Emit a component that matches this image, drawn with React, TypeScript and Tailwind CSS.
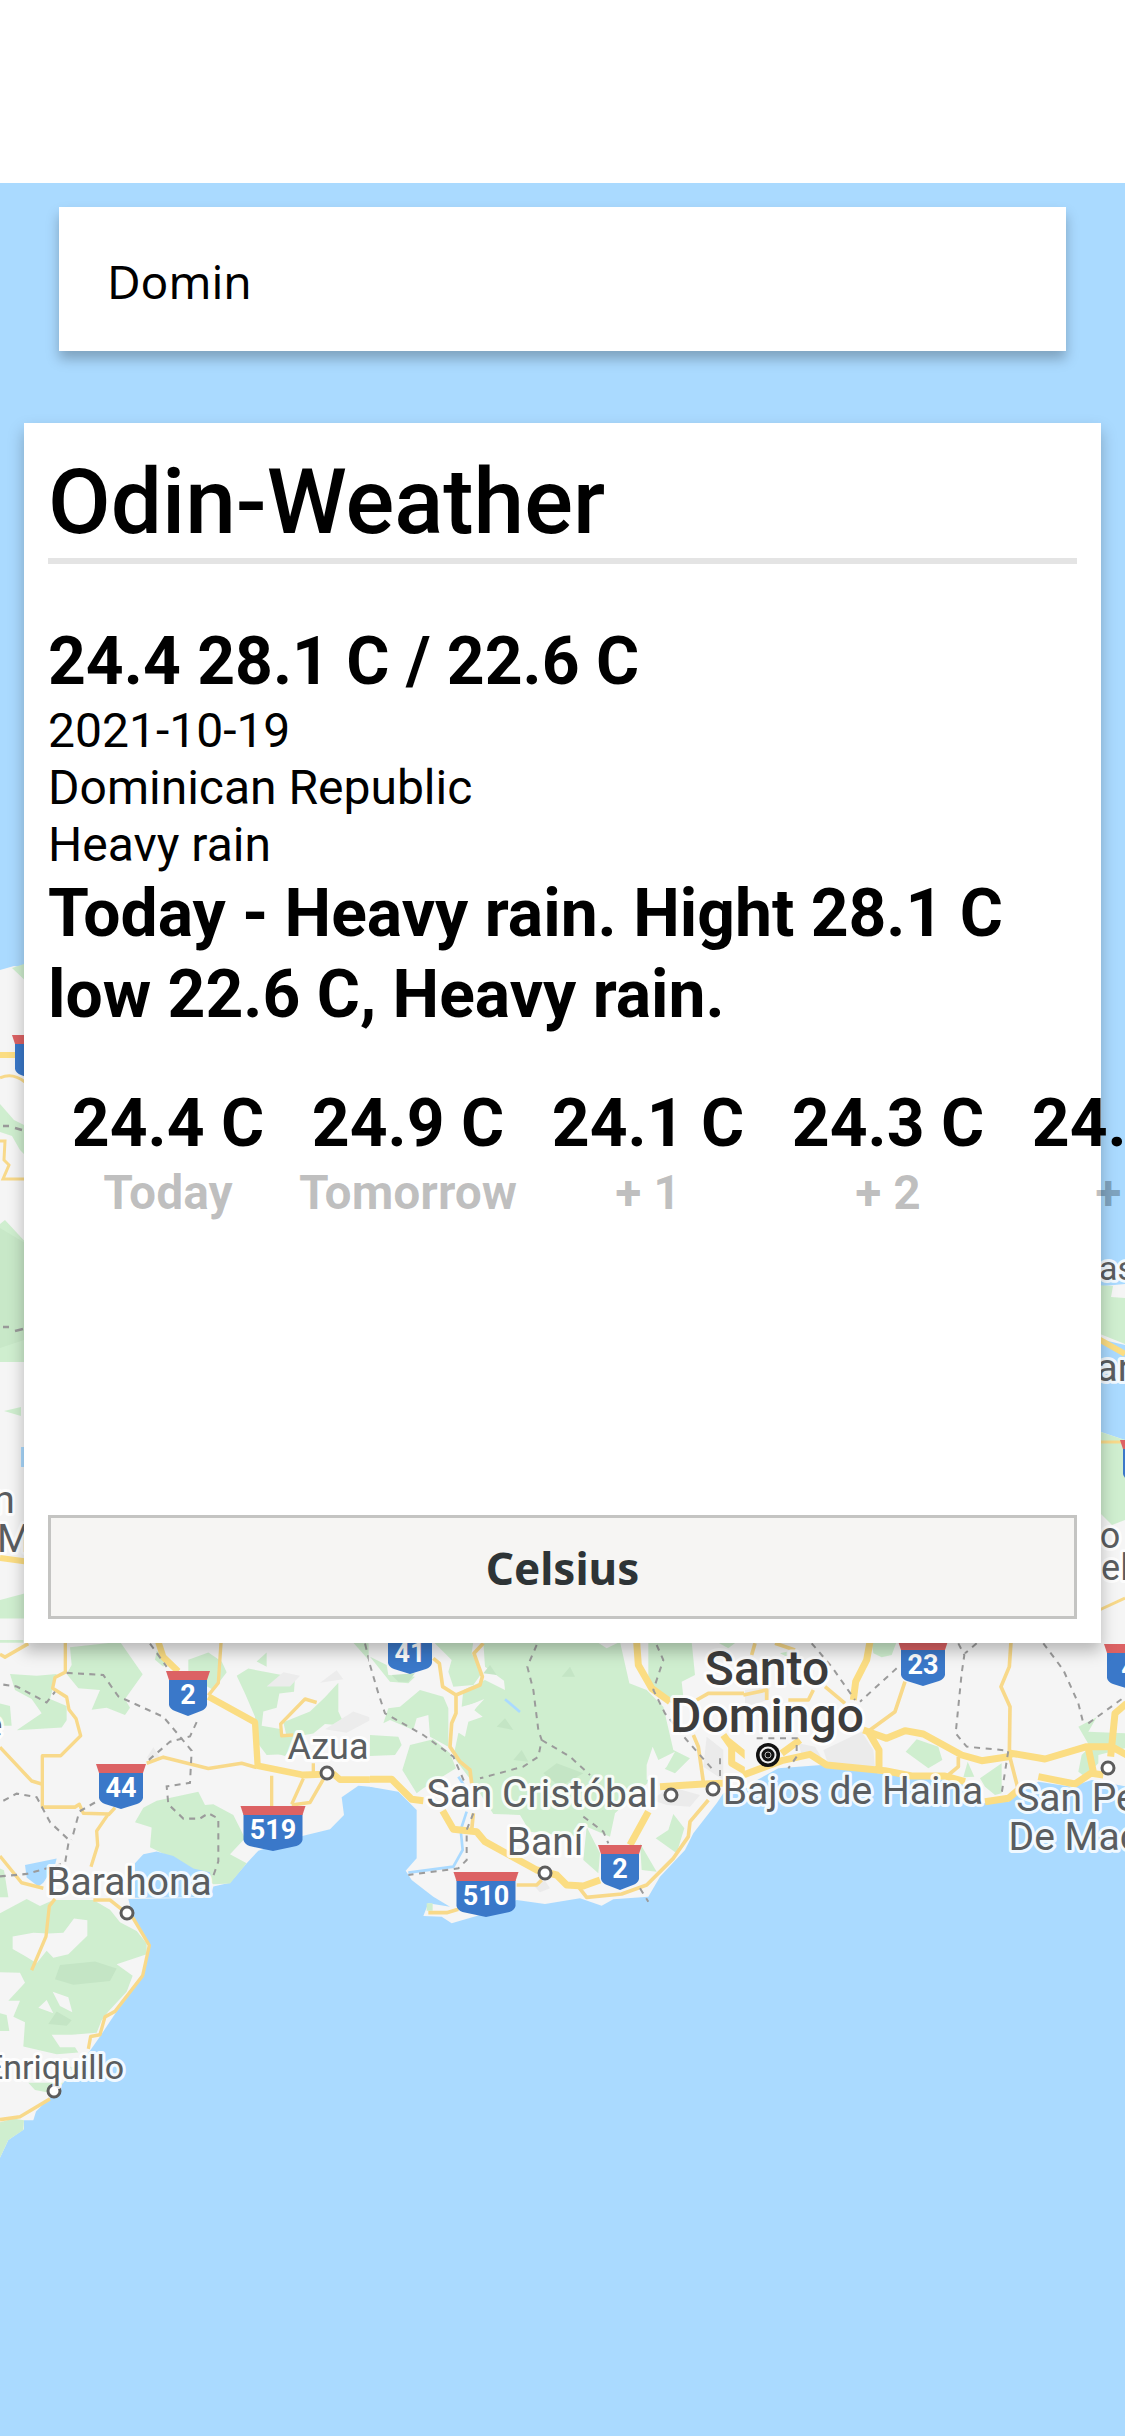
import React, { useState } from "react";

const WATER = "#aadaff";
const LAND = "#f5f5f5";
const GREEN = "#cfeecf";
const SHADE = "#c4e5c5";
const URBAN = "#ebebeb";
const ROAD = "#fbdd83";
const MINOR = "#f8d98a";

type ShieldProps = { x: number; y: number; w: number; label: string };

function Shield({ x, y, w, label }: ShieldProps) {
  const h = w / 2;
  return (
    <g transform={`translate(${x} ${y})`}>
      <path
        d={`M${3 - h} 8H${h - 3}V34Q${h - 4} 38 ${h - 9} 40L0 45L${9 - h} 40Q${4 - h} 38 ${3 - h} 34Z`}
        fill="#3a78c9"
      />
      <path d={`M${-h} 0H${h}L${h - 3} 9H${3 - h}Z`} fill="#dc6264" />
      <text y={33} textAnchor="middle" fontSize={27} fontWeight={700} fill="#fff">
        {label}
      </text>
    </g>
  );
}

type PlaceProps = {
  x: number;
  y: number;
  size?: number;
  weight?: number;
  fill?: string;
  children: string;
};

function Place({ x, y, size = 39, weight = 400, fill = "#5a5d60", children }: PlaceProps) {
  return (
    <text
      x={x}
      y={y}
      textAnchor="middle"
      fontSize={size}
      fontWeight={weight}
      fill={fill}
      stroke="#fff"
      strokeOpacity={0.85}
      strokeWidth={6}
      strokeLinejoin="round"
      paintOrder="stroke"
    >
      {children}
    </text>
  );
}

function Town({ x, y }: { x: number; y: number }) {
  return <circle cx={x} cy={y} r={6} fill="#fff" stroke="#5c5c5c" strokeWidth={3} />;
}

function WestCoast() {
  return (
    <g transform="translate(0 1640) scale(0.33333 0.35714)">
      <path
        d="M0-60H1145V414L1075 408L1025 440L1032 490L990 530L910 548L775 590L740 625L690 680L640 690L632 722L385 725L400 780L450 860L425 945L350 1040L300 1110L270 1150L190 1240L150 1280L108 1320L100 1345L72 1345V1370L25 1400L0 1450Z"
        fill={LAND}
      />
      <g fill={GREEN}>
        <path d="M210 20L360 5L428 96L375 165L390 190L375 210L320 190L275 195L300 140L235 135L200 95L215 70Z" />
        <path d="M30 95L110 100L170 95L150 165L200 185V225L185 245L50 253L125 205L95 165L45 140Z" />
        <path d="M0 178L30 185L35 240H0Z" />
        <path d="M565 55L625 35L665 60L680 90L640 140L565 100Z" />
        <path d="M770 60L800 35V75ZM710 100L745 80L885 105L882 145L838 150L830 190L790 200L785 240L845 250L850 320L800 322L770 285L765 215L735 150Z" />
        <path d="M1015 120V200L1035 240L975 235L940 262L900 268L855 325L800 310L790 265L860 270L850 230L930 200L975 160Z" />
        <path d="M470 30L500 55L490 75L465 55ZM0 0H70V8H0ZM1060 8L1140 10V100L1110 60Z" />
        <path d="M405 510L430 470L470 450L595 425L615 462L640 460L700 490L735 555L690 600L740 625L690 682L640 684L560 630L450 580L455 525Z" />
        <path d="M0 640L12 645L25 720H0Z" />
        <path d="M0 765L80 725L120 745L160 728H280L330 755L360 790L410 815L440 850V880L350 908L398 940L380 985L325 1040L305 1065L290 1100L215 1105L155 1105L180 1140H225L235 1155L170 1160L70 1138L75 1070L40 1055L60 1010H25L75 960L60 932L0 930Z" />
        <path d="M0 1045L20 1050L28 1095H0ZM85 1240H190L160 1270L105 1260ZM0 1350L40 1340L72 1345L70 1372L25 1400L0 1450ZM210 1195L245 1200L225 1230Z" />
      </g>
      <g fill={LAND}>
        <path d="M38 830L100 820L145 822L190 820L222 780L262 785V828L205 880L160 890L140 870L110 905L75 885L38 865Z" />
        <path d="M115 1030L140 1008L160 1045ZM158 985L205 1000L217 1042L180 1025Z" />
      </g>
      <g fill={SHADE}>
        <path d="M165 950L180 910L285 900L350 920L330 955L220 965ZM145 1075L170 1040L215 1065L200 1080Z" />
      </g>
      <g fill="#ececec">
        <path d="M800 130L850 90L900 100L870 130ZM960 120L1010 85L1030 110ZM975 250L1060 200L1120 220L1040 260ZM440 330L460 300L480 330Z" />
      </g>
      <g fill={WATER}>
        <path d="M75 630L170 612L165 630L130 680L115 690L80 665ZM405 625L430 600L470 592L520 605L580 640L630 650L640 720L405 722Z" />
      </g>
      <g fill="none" stroke={MINOR} strokeWidth={10} strokeLinejoin="round">
        <path d="M0 40L15 48L85 10M196 8V90L165 105L158 135L200 160L207 195L228 220L242 268L182 324H127V468H225L238 460L250 485L325 487L290 535L293 575L273 635" />
        <path d="M0 300L95 395L125 403M0 605L65 680L130 695M663 8L655 120L625 155M440 345L490 328L625 360L725 345L770 357" />
        <path d="M950 175L915 165L842 235L845 268L880 266M815 380V465M910 388L875 460M970 390L930 455L875 462M940 345V370M345 470L325 490" />
        <path d="M165 725L148 745L138 830L95 925M280 728H330L400 780L448 855L428 940L345 1040L315 1055L300 1105L272 1110L265 1145M0 1343L60 1335L150 1285" />
      </g>
      <g fill="none" stroke={ROAD} strokeWidth={19} strokeLinejoin="round">
        <path d="M475 5L490 48L535 88M625 158L765 230L773 352L910 378L1000 375L1020 391H1140" />
      </g>
      <g fill="none" stroke="#9b9b9b" strokeWidth={6} strokeDasharray="18 16">
        <path d="M10 125L50 130L140 175L165 145M200 92L310 98L355 158L490 215L575 310L570 400L500 410L505 460L550 500L600 500L625 485L655 500V620L640 660" />
        <path d="M450 10L500 75M590 230L570 270L510 285L435 345M10 450L50 430L110 440L150 510L207 560L195 625L80 655L0 662M285 455L238 480L215 560M1095 10L1140 180" />
      </g>
    </g>
  );
}

function CentralCoast() {
  return (
    <g transform="translate(370 1640) scale(0.33333)">
      <path
        d="M-5-60H1145V440L1060 460L1040 490L970 580L945 630L870 710L835 770L730 778L695 797L630 775L525 792L440 780L330 825L245 850L215 830L160 828L175 790L240 800L190 770L125 720L107 692L140 655V510L85 455L0 440Z"
        fill={LAND}
      />
      <g fill={GREEN}>
        <path d="M190 5H310L305 40L335 100L310 135L250 140L235 95L245 60ZM0 50L50 75L55 105L135 110L115 130L60 125Z" />
        <path d="M40 250L55 205L90 200L150 150L220 170L235 205V320L180 290L175 225L140 235L130 270L60 240ZM0 285L85 290L95 315L75 345L0 348Z" />
        <path d="M340 5H680L710 25L750 5L778 130L830 150L880 200L910 330L960 355L915 400L845 370L832 430L735 520L720 590L650 560L620 590L480 575L450 525L370 522L310 430L250 350L265 280L300 230L330 185L275 200L280 150L345 120L405 150L402 122L345 80Z" />
        <path d="M120 315L190 298L240 340L258 385L160 445L140 460L97 390Z" />
        <path d="M835 5H965L975 105L935 125L940 170L905 190L865 165L835 130ZM910 522L943 565L920 640L857 595L895 570ZM650 560L690 640L685 700L640 660ZM810 610L860 695L815 690ZM170 790H188V812H170ZM1040 5H1100L1075 25Z" />
      </g>
      <g fill={LAND}>
        <path d="M275 205L343 177L312 210L338 230L295 245L285 290L245 265ZM830 375L848 320L865 360L915 335L890 380L862 410L830 420Z" />
      </g>
      <g fill={SHADE}>
        <path d="M380 260L405 235L430 270ZM430 360L455 330L475 365ZM520 400L560 370L640 400L570 440ZM575 110L600 80L615 110ZM340 100L360 75L380 105ZM65 105L135 100L115 125H85Z" />
      </g>
      <path d="M845 480L900 440L990 465L960 500L890 495ZM1010 290L1060 330V420L1000 380ZM490 735L525 722L540 745L510 757Z" fill={URBAN} />
      <g fill="none" stroke={WATER} strokeWidth={8}>
        <path d="M405 178L450 216M265 410L285 440M290 515L272 570L278 630L250 680L115 698" />
      </g>
      <g fill="none" stroke={MINOR} strokeWidth={11} strokeLinejoin="round">
        <path d="M190 55L208 70L218 140L258 165L330 135L337 110L312 40L340 10M258 165V220L245 250L240 320L270 365L300 390L305 430M310 520L305 570M440 735H500L515 720M175 818H230L265 808M625 740L650 772L755 762L830 735L910 655L955 590L960 545L1015 480M970 285L985 320L1000 425M980 180L1015 160H1140" />
      </g>
      <g fill="none" stroke={ROAD} strokeWidth={21} strokeLinejoin="round">
        <path d="M0 418H65L125 478L160 482M218 512L250 568L320 575L345 605L500 690L560 705L590 735L640 738L690 720M780 615L835 515M870 440L1000 432L1060 430M800 5L805 75L845 145L900 185M1060 285L1085 320V370L1145 405M1070 300L1145 360" />
      </g>
      <g fill="none" stroke="#9b9b9b" strokeWidth={6} strokeDasharray="18 17">
        <path d="M500 15L472 80L490 150L505 270L515 300L505 350L460 380L330 415M515 300L600 350L660 405M0 75L25 160L45 220L160 285L250 350L285 430M310 520L290 570V660L265 685L115 705M640 530L700 575L715 610M860 15L880 60L850 150L885 220L950 300L1025 385M810 745L835 785M1050 355V410" />
      </g>
    </g>
  );
}

function EastCoast() {
  return (
    <g transform="translate(745 1640) scale(0.33333)">
      <path
        d="M-5-60H1145V440L1040 420L980 440L880 425L830 450L790 485L715 490L650 425L560 415L400 400L230 375L100 385L0 440Z"
        fill={LAND}
      />
      <path d="M235 330L350 275L385 330L390 380L250 375ZM0 200L70 180L75 140L0 150ZM160 310L210 320L240 370L170 345Z" fill={URBAN} />
      <g fill={GREEN}>
        <path d="M380 5H455L440 45L410 52L385 40ZM482 335L515 298L580 320L592 360L550 385ZM655 412L668 365L688 410ZM705 415L770 370V460L750 465L720 440ZM1000 260L1055 232L1030 275L1140 280V325L1060 345L1060 370L1020 410L1000 395L1010 345L1035 320ZM1100 330H1140V350ZM105 40L125 35V50Z" />
      </g>
      <g fill="none" stroke={MINOR} strokeWidth={11} strokeLinejoin="round">
        <path d="M480 125L450 215L375 270M798 5L793 80L768 140L795 200L793 345L820 450M240 140L300 190M-5 165L65 150V180M130 180H190L205 150M640 350V380L610 405M20 45L30 10M90 10L150 30" />
      </g>
      <g fill="none" stroke={ROAD} strokeWidth={21} strokeLinejoin="round">
        <path d="M375 5L365 60L332 125L325 180M355 270L425 295L480 272L535 282L650 345L710 362L790 350L800 340L900 357L1025 320H1100L1145 345M370 275L402 330V385M-5 405L110 362L195 343L245 375L420 392L500 408H600L660 425M110 340L165 300M720 485L790 475L820 450M880 410L990 432L1045 395L1030 325M1097 350L1110 220L1145 190M1040 400L1075 405" />
      </g>
      <g fill="none" stroke="#9b9b9b" strokeWidth={6} strokeDasharray="18 17">
        <path d="M200 10L260 80L330 180M455 85L345 185M640 10L658 45L650 100L632 280L665 320L790 332L770 460M695 10L660 40M895 10L955 90L1000 190L1015 250M1030 250L1140 170M35 295H155V350L130 385" />
      </g>
    </g>
  );
}

function SideStrips() {
  return (
    <g>
      <path d="M0 970L14 966L60 972V1640H0ZM1060 1290L1125 1284V1345L1095 1338L1060 1330ZM1060 1425L1101 1432L1125 1440V1640H1060Z" fill={LAND} />
      <g fill={GREEN}>
        <path d="M12 968L30 962V985ZM0 1104L14 1120L30 1128V1160L20 1150L12 1136L0 1132ZM0 1224L5 1220L30 1247V1362H0ZM4 1411L21 1407V1416ZM0 1600L30 1592V1645L0 1640Z" />
        <path d="M1095 1285L1113 1286L1111 1297L1125 1298V1344L1095 1332ZM1095 1430L1125 1440V1520L1112 1525L1095 1508Z" />
      </g>
      <path d="M0 1228L30 1246V1338L0 1348Z" fill="#c8e8c8" />
      <path d="M21 1447H30V1467H21Z" fill={WATER} />
      <g fill="none" stroke={MINOR} strokeWidth={3}>
        <path d="M0 1078Q12 1072 25 1082M0 1141H5L4 1160L9 1165L3 1179H24M1095 1442H1125M1095 1612L1125 1598" />
      </g>
      <path d="M0 1055H20M0 1558L30 1562M1095 1337L1125 1354" fill="none" stroke={ROAD} strokeWidth={6} />
      <path d="M3 1126H9M15 1128L22 1130M3 1327H9M15 1331L23 1329" stroke="#999" strokeWidth={2.5} />
    </g>
  );
}

function MapBackdrop() {
  return (
    <svg
      className="absolute inset-0 h-full w-full"
      viewBox="0 183 1125 2253"
      preserveAspectRatio="xMidYMid slice"
      role="img"
      aria-label="Map of the southern Dominican Republic"
    >
      <rect y={0} width={1125} height={2600} fill={WATER} />
      <SideStrips />
      <WestCoast />
      <CentralCoast />
      <EastCoast />

      <Shield x={34} y={1035} w={44} label="" />
      <Shield x={188} y={1671} w={44} label="2" />
      <Shield x={121} y={1764} w={50} label="44" />
      <Shield x={273} y={1806} w={65} label="519" />
      <Shield x={410} y={1629} w={50} label="41" />
      <Shield x={486} y={1872} w={65} label="510" />
      <Shield x={620} y={1845} w={44} label="2" />
      <Shield x={923} y={1641} w={50} label="23" />
      <Shield x={1129} y={1644} w={50} label="4" />
      <Shield x={1142} y={1440} w={44} label="" />

      <Town x={54} y={2091} />
      <Town x={327} y={1773} />
      <Town x={127} y={1913} />
      <Town x={671} y={1795} />
      <Town x={713} y={1789} />
      <Town x={545} y={1873} />
      <Town x={1108} y={1768} />
      <g transform="translate(768 1755)">
        <circle r={12} fill="#111" />
        <circle r={7.5} fill="none" stroke="#eee" strokeWidth={2} />
        <circle r={3} fill="#111" stroke="#bbb" strokeWidth={1} />
      </g>

      <Place x={328} y={1759} size={36}>Azua</Place>
      <Place x={129} y={1895}>Barahona</Place>
      <Place x={54} y={2079} size={34}>Enriquillo</Place>
      <Place x={542} y={1807}>San Cristóbal</Place>
      <Place x={545} y={1855}>Baní</Place>
      <Place x={853} y={1804}>Bajos de Haina</Place>
      <Place x={1105} y={1811}>San Pedro</Place>
      <Place x={1107} y={1850}>De Macorís</Place>
      <Place x={767} y={1685} size={48} weight={500} fill="#3c3c3c">Santo</Place>
      <Place x={767} y={1732} size={48} weight={500} fill="#3c3c3c">Domingo</Place>
      <Place x={-66} y={1513}>San Juan</Place>
      <Place x={14} y={1552}>M</Place>
      <Place x={-8} y={1738}>e</Place>
      <Place x={1117} y={1280} size={34}>as</Place>
      <Place x={1118} y={1381}>an</Place>
      <Place x={1110} y={1548} size={36}>o</Place>
      <Place x={1115} y={1580} size={36}>el</Place>
    </svg>
  );
}

const forecast = [
  { temperature: "24.4 C", day: "Today" },
  { temperature: "24.9 C", day: "Tomorrow" },
  { temperature: "24.1 C", day: "+ 1" },
  { temperature: "24.3 C", day: "+ 2" },
  { temperature: "24.2 C", day: "+ 3" },
];

export default function App() {
  const [query, setQuery] = useState("Domin");

  return (
    <div className="flex min-h-screen flex-col overflow-hidden bg-white font-['Roboto',sans-serif] text-[48px] leading-[57px] text-black">
      <header className="h-[183px] shrink-0 bg-white" />
      <main className="relative flex grow flex-col overflow-hidden bg-[#aadaff] pt-6">
        <MapBackdrop />

        <input
          type="text"
          aria-label="Search location"
          value={query}
          onChange={(event) => setQuery(event.target.value)}
          className="relative mx-[59px] h-36 bg-white px-12 pt-1 font-['Noto_Sans',sans-serif] text-[46px] shadow-[0_8px_12px_rgba(0,0,0,0.26)] outline-none"
        />

        <section className="relative mx-6 mt-18 bg-white p-6 shadow-[0_8px_15px_rgba(0,0,0,0.26)]">
          <h1 className="border-b-6 border-[#e4e4e4] text-[91px] leading-[111px] font-medium">Odin-Weather</h1>

          <div className="mt-[57px]">
            <h2 className="text-[66px] leading-[81px] font-bold">24.4 28.1 C / 22.6 C</h2>
            <p>2021-10-19</p>
            <p>Dominican Republic</p>
            <p>Heavy rain</p>
            <h2 className="text-[66px] leading-[81px] font-bold">
              Today - Heavy rain. Hight 28.1 C low 22.6 C, Heavy rain.
            </h2>
          </div>

          <ul className="mt-12 flex min-h-[432px]">
            {forecast.map(({ temperature, day }) => (
              <li key={day} className="flex w-60 shrink-0 flex-col items-center font-bold whitespace-nowrap">
                <span className="text-[66px] leading-[81px]">{temperature}</span>
                <span className="text-black/25">{day}</span>
              </li>
            ))}
          </ul>

          <button
            type="button"
            className="block h-[104px] w-full border-3 border-[#c4c4c2] bg-[#f6f5f3] pt-0.5 font-['Noto_Sans',sans-serif] text-[44px] font-bold text-[#2e3436]"
          >
            Celsius
          </button>
        </section>
      </main>
    </div>
  );
}
